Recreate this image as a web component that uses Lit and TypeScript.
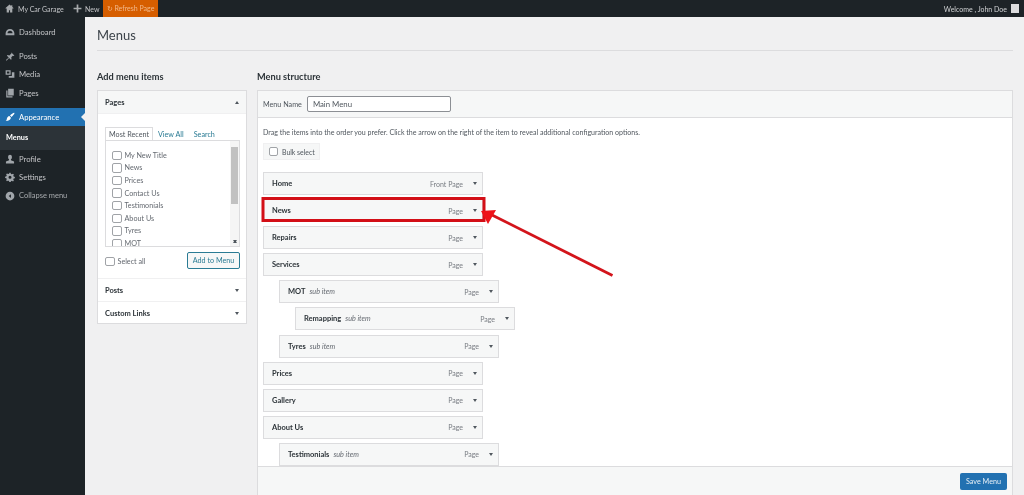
import { LitElement, html, css, svg } from "lit";
import { customElement } from "lit/decorators.js";

const icons: Record<string, string> = {
  home: "M8 1 1 7v1h2v7h4v-4h2v4h4V8h2V7l-2-1.700V2h-2v1.600z",
  plus: "M6.500 1h3v5.500H15v3H9.500V15h-3V9.500H1v-3h5.500z",
  gauge: "M8 3C4 3 1 6 1 10v3h14v-3c0-4-3-7-7-7zm0 3a4 4 0 0 1 4 4H4a4 4 0 0 1 4-4z",
  pin: "M9 1l6 6-1.500 1-1-.5-2.500 2.500.5 3-1 1-3-3-4 4.500-1-1 4.500-4-3-3 1-1 3 .5L10.500 3.500 10 2.500z",
  media: "M1 2h8v7H1zM3 4v3h4V4zM11 5h4v9H6v-3h5z",
  pages: "M5 1h9v11H5zM2 4h2v9h8v2H2z",
  brush: "M15 1.500c.8.8-2.500 4.500-4.500 6.500L8 5.500c2-2 6.200-4.800 7-4zM7 6.500l2.500 2.500c-.5 2.500-3 5-8.500 5.500 2-1.500 1.500-3 2.500-5.500 1-1.500 2.500-2.500 3.500-2.500z",
  user: "M8 1a3 3 0 0 1 3 3v2a3 3 0 0 1-1.500 2.500V10l5 2v3H1.500v-3l5-2V8.500A3 3 0 0 1 5 6V4a3 3 0 0 1 3-3z",
  gear: "M7 1h2l.5 2 1.500.6 1.800-1 1.400 1.400-1 1.800.6 1.500 2 .5v2l-2 .5-.6 1.500 1 1.800-1.400 1.400-1.800-1-1.500.6-.5 2H7l-.5-2L5 13.600l-1.800 1-1.400-1.400 1-1.800L2.200 9.900.2 9.400v-2l2-.5.6-1.500-1-1.800L3.200 2.200l1.800 1L6.500 2.600zM8 6a2.400 2.400 0 1 0 0 4.800A2.400 2.400 0 0 0 8 6z",
  collapse: "M8 1a7 7 0 1 1 0 14A7 7 0 0 1 8 1zm1.500 4L6 8l3.500 3z",
};

const icon = (n: string, cls = "ic") =>
  html`<svg class=${cls} viewBox="0 0 16 16"><path d=${icons[n]}></path></svg>`;

@customElement("app-root")
export class AppRoot extends LitElement {
  static styles = css`
    :host { display: block; width: 1024px; height: 495px; overflow: hidden; position: relative; background: #f0f0f1;
      font-family: "Lato", "Open Sans", sans-serif; font-size: 7.200px; color: #3c434a; filter: blur(0.3px); }
    * { box-sizing: border-box; }
    .bar { height: 17px; background: #1d2327; color: #c3c4c7; display: flex; align-items: center; font-size: 7px; }
    .bar .ic { width: 9px; height: 9px; fill: #a7aaad; }
    .site { display: flex; align-items: center; gap: 4px; padding-left: 5px; width: 73px; white-space: nowrap; }
    .new { display: flex; align-items: center; gap: 3px; width: 30px; }
    .refresh { background: #d65e00; color: #f2b98a; height: 17px; width: 55px; display: flex; align-items: center; justify-content: center; white-space: nowrap; }
    .welcome { margin-left: auto; display: flex; align-items: center; gap: 4px; padding-right: 5px; color: #d0d2d4; }
    .avatar { width: 8px; height: 9px; background: #dcdcde; }
    .main { display: flex; height: 478px; }
    .side { width: 85px; background: #1d2327; color: #c3c4c7; padding-top: 6px; flex: none; font-size: 7.700px; }
    .mi { height: 18.500px; display: flex; align-items: center; padding-left: 5px; gap: 4px; position: relative; }
    .mi .ic { width: 10px; height: 10px; fill: #a0a5aa; flex: none; }
    .sep { height: 5px; }
    .sep.wide { height: 6px; }
    .mi.cur { background: #2271b1; color: #fff; height: 17.500px; }
    .mi.cur .ic { fill: #fff; }
    .mi.cur::after { content: ""; position: absolute; right: 0; top: 5px; border: 4px solid transparent; border-right-color: #f0f0f1; border-left: 0; }
    .sub { background: #2c3338; height: 24px; display: flex; align-items: center; padding-left: 6px; color: #fff; font-weight: 700; font-size: 7.300px; }
    .collapse { color: #a7aaad; font-size: 7.500px; }
    .content { flex: 1; padding: 0 11px 0 12px; min-width: 0; display: flex; flex-direction: column; }
    h1 { margin: 0; font-size: 13px; font-weight: 400; color: #3c434a; height: 34px; padding-top: 10px; line-height: 17px; border-bottom: 1px solid #dcdcde; }
    .cols { display: flex; gap: 10px; flex: 1; min-height: 0; padding-top: 20px; }
    .left { width: 150px; flex: none; }
    .right { flex: 1; min-width: 0; display: flex; flex-direction: column; }
    h2 { margin: 0; height: 19px; font-size: 9.200px; line-height: 12px; font-weight: 700; color: #2c3338; flex: none; }
    .box { background: #fff; border: 1px solid #dcdcde; height: 234px; }
    .bh { height: 23px; display: flex; align-items: center; justify-content: space-between; padding: 0 7px; font-weight: 700; color: #2c3338; font-size: 7.500px; border-top: 1px solid #f0f0f1; }
    .bh.first { background: #f6f7f7; border-top: 0; border-bottom: 1px solid #f0f0f1; }
    .tri { width: 0; height: 0; border-left: 2.500px solid transparent; border-right: 2.500px solid transparent; border-top: 3px solid #50575e; }
    .tri.up { border-top: 0; border-bottom: 3px solid #50575e; }
    .pb { padding: 13px 6px 0 7px; height: 164px; }
    .tabs { display: flex; height: 14px; align-items: center; color: #2a7b94; margin-bottom: -1px; position: relative; }
    .tab { color: #50575e; border: 1px solid #dcdcde; border-bottom: 1px solid #fff; height: 14px; width: 48px; display: flex; align-items: center; justify-content: center; margin-right: 5px; }
    .tabs .srch { margin-left: 10px; }
    .list { border: 1px solid #dcdcde; height: 107px; padding: 8px 0 0 6px; position: relative; overflow: hidden; }
    .row { height: 12.600px; display: flex; align-items: center; gap: 3px; color: #646970; }
    .cb { width: 9.500px; height: 9.500px; border: 1px solid #a0a3a7; border-radius: 2px; background: #fff; flex: none; }
    .scroll { position: absolute; right: 0; top: 0; bottom: 0; width: 9px; background: #f5f5f5; display: flex; flex-direction: column; align-items: center; padding-top: 3px; }
    .thumb { width: 7px; height: 57px; background: #c1c1c1; margin-top: 3px; }
    .scroll .tri { position: absolute; bottom: 3px; }
    .pf { display: flex; align-items: center; justify-content: space-between; height: 17px; margin-top: 5px; color: #646970; }
    .sel { display: flex; align-items: center; gap: 3px; margin-top: 2px; }
    .add { height: 17px; width: 53px; border: 1px solid #2a7b94; border-radius: 2px; color: #2a7b94; background: #f6f7f7; display: flex; align-items: center; justify-content: center; }
    .panel { flex: 1; background: #fff; border: 1px solid #dcdcde; border-bottom: 0; display: flex; flex-direction: column; min-height: 0; }
    .ph { height: 27px; background: #f6f7f7; border-bottom: 1px solid #dcdcde; display: flex; align-items: center; gap: 5px; padding-left: 5px; flex: none; color: #50575e; }
    .name { width: 144px; height: 16px; border: 1px solid #8c8f94; border-radius: 2px; background: #fff; display: flex; align-items: center; padding-left: 5px; font-size: 7.800px; }
    .pbody { flex: 1; padding: 0 5px; min-height: 0; overflow: hidden; }
    .hint { height: 15px; margin-top: 7px; line-height: 15px; white-space: nowrap; color: #50575e; font-size: 7.050px; }
    .bulk { margin-top: 3px; width: 57px; height: 17px; background: #f6f7f7; border: 1px solid #f0f0f1; display: flex; align-items: center; gap: 4px; padding-left: 5px; color: #50575e; white-space: nowrap; font-size: 6.900px; }
    .bulk .cb { width: 9px; height: 9px; }
    .items { margin-top: 12px; display: flex; flex-direction: column; gap: 4.100px; }
    .it { width: 220px; height: 23px; flex: none; border: 1px solid #dcdcde; background: #f6f7f7; display: flex; align-items: center; padding: 0 5px 0 8px; }
    .d1 { margin-left: 16px; }
    .d2 { margin-left: 32px; }
    .it b { color: #2c3338; font-weight: 700; font-size: 7.500px; }
    .it i { color: #646970; margin-left: 4px; font-size: 7.200px; }
    .it span { margin-left: auto; color: #787c82; font-size: 7px; }
    .it .tri { margin: 0 0 0 10px; }
    .pfoot { height: 29px; background: #f6f7f7; border-top: 1px solid #dcdcde; display: flex; align-items: center; justify-content: flex-end; padding-right: 5px; flex: none; }
    .save { width: 47px; height: 17px; background: #2271b1; color: #e8f0f6; border-radius: 2px; display: flex; align-items: center; justify-content: center; }
    .over { position: absolute; left: 0; top: 0; pointer-events: none; }
  `;

  private items: [string, string, number, boolean][] = [
    ["Home", "Front Page", 0, false],
    ["News", "Page", 0, false],
    ["Repairs", "Page", 0, false],
    ["Services", "Page", 0, false],
    ["MOT", "Page", 1, true],
    ["Remapping", "Page", 2, true],
    ["Tyres", "Page", 1, true],
    ["Prices", "Page", 0, false],
    ["Gallery", "Page", 0, false],
    ["About Us", "Page", 0, false],
    ["Testimonials", "Page", 1, true],
  ];

  render() {
    return html`
      <div class="bar">
        <div class="site">${icon("home")}My Car Garage</div>
        <div class="new">${icon("plus")}New</div>
        <div class="refresh">↻ Refresh Page</div>
        <div class="welcome">Welcome , John Doe <div class="avatar"></div></div>
      </div>
      <div class="main">
        <nav class="side">
          <div class="mi">${icon("gauge")}Dashboard</div>
          <div class="sep"></div>
          <div class="mi">${icon("pin")}Posts</div>
          <div class="mi">${icon("media")}Media</div>
          <div class="mi">${icon("pages")}Pages</div>
          <div class="sep wide"></div>
          <div class="mi cur">${icon("brush")}Appearance</div>
          <div class="sub">Menus</div>
          <div class="mi">${icon("user")}Profile</div>
          <div class="mi">${icon("gear")}Settings</div>
          <div class="mi collapse">${icon("collapse")}Collapse menu</div>
        </nav>
        <div class="content">
          <h1>Menus</h1>
          <div class="cols">
            <div class="left">
              <h2>Add menu items</h2>
              <div class="box">
                <div class="bh first">Pages<div class="tri up"></div></div>
                <div class="pb">
                  <div class="tabs"><div class="tab">Most Recent</div><div>View All</div><div class="srch">Search</div></div>
                  <div class="list">
                    ${["My New Title", "News", "Prices", "Contact Us", "Testimonials", "About Us", "Tyres", "MOT"].map(
                      (t) => html`<div class="row"><div class="cb"></div>${t}</div>`
                    )}
                    <div class="scroll"><div class="tri up"></div><div class="thumb"></div><div class="tri"></div></div>
                  </div>
                  <div class="pf">
                    <div class="sel"><div class="cb"></div>Select all</div>
                    <div class="add">Add to Menu</div>
                  </div>
                </div>
                <div class="bh">Posts<div class="tri"></div></div>
                <div class="bh">Custom Links<div class="tri"></div></div>
              </div>
            </div>
            <div class="right">
              <h2>Menu structure</h2>
              <div class="panel">
                <div class="ph">Menu Name <div class="name">Main Menu</div></div>
                <div class="pbody">
                  <div class="hint">Drag the items into the order you prefer. Click the arrow on the right of the item to reveal additional configuration options.</div>
                  <div class="bulk"><div class="cb"></div>Bulk select</div>
                  <div class="items">
                    ${this.items.map(
                      ([n, t, d, s]) => html`<div class="it d${d}"><b>${n}</b>${s ? html`<i>sub item</i>` : ""}<span>${t}</span><div class="tri"></div></div>`
                    )}
                  </div>
                </div>
                <div class="pfoot"><div class="save">Save Menu</div></div>
              </div>
            </div>
          </div>
        </div>
      </div>
      <svg class="over" width="1024" height="495" viewBox="0 0 1024 495">
        ${svg`<rect x="263" y="198.500" width="221" height="22" fill="none" stroke="#d30f17" stroke-width="3"></rect>
        <line x1="612.500" y1="275.500" x2="492" y2="215" stroke="#d3141b" stroke-width="2.800"></line>
        <polygon points="481,211 496,210 488,224" fill="#ee1118"></polygon>`}
      </svg>
    `;
  }
}
